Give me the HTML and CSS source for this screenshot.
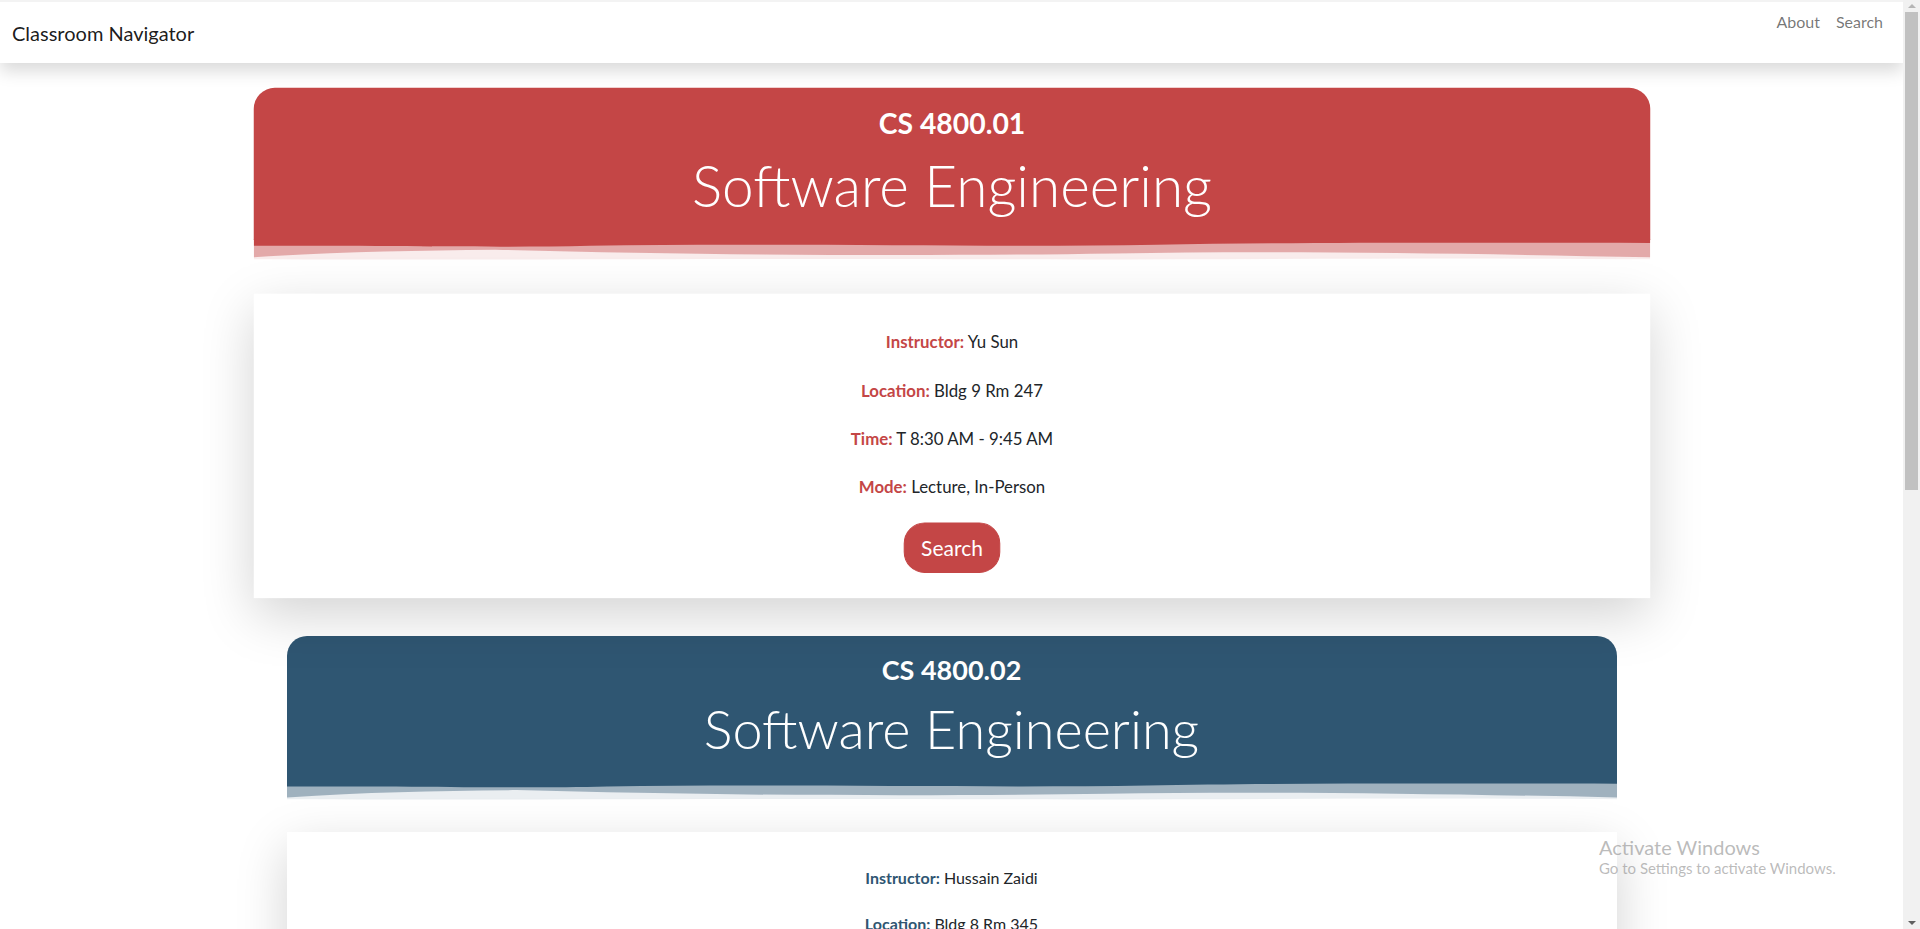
FILE: index.html
```html
<!DOCTYPE html>
<html lang="en">
<head>
<meta charset="utf-8">
<title>Classroom Navigator</title>
<link rel="stylesheet" href="styles.css">
</head>
<body>
<div class="viewport">
  <div class="page">
    <nav class="navbar">
      <a class="brand" href="#">Classroom Navigator</a>
      <ul class="nav-links">
        <li><a href="#">About</a></li>
        <li><a href="#">Search</a></li>
      </ul>
    </nav>

    <main class="course-list">
      <article class="course course--red is-hovered">
        <header class="course-head">
          <h3 class="course-code">CS 4800.01</h3>
          <h1 class="course-title">Software Engineering</h1>
        </header>
        <svg class="wave" viewBox="0 0 1330 24" preserveAspectRatio="none" aria-hidden="true">
          <path class="wave-a" d="M0 0H1330V21C1100 19 900 22 700 21C500 20 300 22 0 21Z"/>
          <path class="wave-b" d="M0 0H1330V19C1150 15 980 12 820 15C640 18 420 17 230 11C150 12 80 13 0 19Z"/>
          <path class="wave-c" d="M0 0H1330V4C1180 4 1000 3 860 6C700 9 500 4 320 7C240 9 150 7 0 7Z"/>
        </svg>
        <div class="course-body">
          <p><strong>Instructor:</strong> Yu Sun</p>
          <p><strong>Location:</strong> Bldg 9 Rm 247</p>
          <p><strong>Time:</strong> T 8:30 AM - 9:45 AM</p>
          <p><strong>Mode:</strong> Lecture, In-Person</p>
          <button class="btn-search" type="button">Search</button>
        </div>
      </article>

      <article class="course course--blue">
        <header class="course-head">
          <h3 class="course-code">CS 4800.02</h3>
          <h1 class="course-title">Software Engineering</h1>
        </header>
        <svg class="wave" viewBox="0 0 1330 24" preserveAspectRatio="none" aria-hidden="true">
          <path class="wave-a" d="M0 0H1330V21C1100 19 900 22 700 21C500 20 300 22 0 21Z"/>
          <path class="wave-b" d="M0 0H1330V19C1150 15 980 12 820 15C640 18 420 17 230 11C150 12 80 13 0 19Z"/>
          <path class="wave-c" d="M0 0H1330V4C1180 4 1000 3 860 6C700 9 500 4 320 7C240 9 150 7 0 7Z"/>
        </svg>
        <div class="course-body">
          <p><strong>Instructor:</strong> Hussain Zaidi</p>
          <p><strong>Location:</strong> Bldg 8 Rm 345</p>
        </div>
      </article>
    </main>
  </div>

  <div class="scrollbar" aria-hidden="true">
    <div class="sb-arrow sb-arrow--up"></div>
    <div class="sb-track"><div class="sb-thumb"></div></div>
    <div class="sb-arrow sb-arrow--down"></div>
  </div>
</div>

<div class="watermark">
  <div class="wm-title">Activate Windows</div>
  <div class="wm-sub">Go to Settings to activate Windows.</div>
</div>
</body>
</html>
```

FILE: styles.css
```css
html, body {
  margin: 0;
  padding: 0;
  height: 100%;
  overflow: hidden;
  background: #fff;
  font-family: "Lato", "Open Sans", sans-serif;
  color: #212529;
}

.viewport {
  display: flex;
  height: 100vh;
}

.page {
  flex: 1;
  overflow: hidden;
  min-width: 0;
}

/* Navbar */
.navbar {
  position: relative;
  z-index: 2;
  display: flex;
  justify-content: space-between;
  align-items: flex-start;
  height: 61px;
  padding: 0 12px;
  background: #fff;
  border-top: 2px solid #f3f3f3;
  box-shadow: 0 8px 16px rgba(0, 0, 0, 0.15);
}

.brand {
  padding-top: 16px;
  font-size: 20px;
  line-height: 30px;
  color: rgba(0, 0, 0, 0.9);
  text-decoration: none;
}

.nav-links {
  display: flex;
  list-style: none;
  margin: 0;
  padding: 0;
}

.nav-links a {
  display: block;
  padding: 8px 8px;
  font-size: 16px;
  line-height: 24px;
  color: rgba(0, 0, 0, 0.55);
  text-decoration: none;
}

/* Course list */
.course-list {
  display: flex;
  flex-direction: column;
  align-items: center;
  gap: 50px;
  padding-top: 37px;
}

.course {
  width: 1330px;
  --theme: #c44646;
}

.course--red { --theme: #c44646; }
.course--blue { --theme: #2f5672; }

.is-hovered {
  transform: scale(1.05);
  transform-origin: center center;
}

.course-head {
  background: var(--theme);
  color: #fff;
  text-align: center;
  border-radius: 20px 20px 0 0;
  padding: 18px 0 20px;
}

.course-code {
  margin: 0 0 10px;
  font-size: 27px;
  line-height: 32px;
  font-weight: 700;
}

.course-title {
  margin: 0;
  font-size: 54px;
  line-height: 65px;
  font-weight: 300;
}

.wave {
  display: block;
  width: 100%;
  height: 22px;
  margin-top: -1px;
}

.wave path { fill: var(--theme); }
.wave .wave-a { opacity: 0.1; }
.wave .wave-b { opacity: 0.4; }
.wave .wave-c { opacity: 1; }

.course-body {
  margin-top: 30px;
  padding: 34px 0 24px;
  background: #fff;
  text-align: center;
  box-shadow: 0 16px 48px rgba(0, 0, 0, 0.175);
}

.course-body p {
  margin: 0 0 22px;
  font-size: 16px;
  line-height: 24px;
}

.course-body strong {
  color: var(--theme);
  font-weight: 700;
}

.btn-search {
  font-family: inherit;
  font-size: 20px;
  line-height: 30px;
  padding: 8px 16px;
  color: #fff;
  background: var(--theme);
  border: 1px solid var(--theme);
  border-radius: 20px;
  cursor: pointer;
}

/* Fake classic scrollbar */
.scrollbar {
  width: 17px;
  flex: none;
  display: flex;
  flex-direction: column;
  background: #f1f1f1;
}

.sb-arrow {
  height: 12px;
  display: flex;
  align-items: center;
  justify-content: center;
}

.sb-arrow::before {
  content: "";
  width: 0;
  height: 0;
  border-left: 4px solid transparent;
  border-right: 4px solid transparent;
}

.sb-arrow--up::before { border-bottom: 4px solid #b5b5b5; }
.sb-arrow--down::before { border-top: 4px solid #606060; }

.sb-track {
  flex: 1;
  padding: 0 2px;
}

.sb-thumb {
  height: 478px;
  background: #c1c1c1;
}

/* OS watermark overlay */
.watermark {
  position: absolute;
  left: 1599px;
  top: 835px;
  color: rgba(120, 120, 120, 0.5);
  font-family: "Lato", "Open Sans", sans-serif;
  pointer-events: none;
}

.wm-title {
  font-size: 20px;
  line-height: 24px;
}

.wm-sub {
  font-size: 15px;
  line-height: 18px;
}
```
